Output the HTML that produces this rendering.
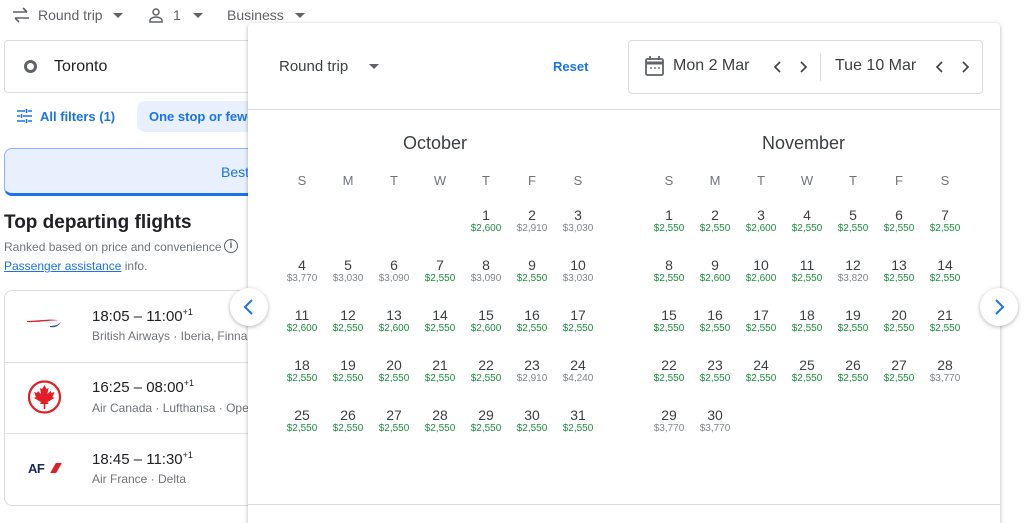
<!DOCTYPE html>
<html><head><meta charset="utf-8"><style>
*{margin:0;padding:0;box-sizing:border-box}
body{width:1024px;height:511px;overflow:hidden;background:#fff;font-family:"Liberation Sans",Arial,sans-serif;color:#3c4043;position:relative}
.a{position:absolute}
.tb{font-size:14px;color:#5f6368;top:7px}
.caret{display:inline-block;border-left:5px solid transparent;border-right:5px solid transparent;border-top:5px solid #5f6368;vertical-align:middle}
.grid{position:absolute;display:grid;grid-template-columns:repeat(7,46px);grid-auto-rows:50px;text-align:center}
.d{font-size:14px;color:#3c4043;line-height:16px}
.p{font-size:10px;line-height:12px;color:#80868b}
.g{color:#1e8e3e}
.hd{position:absolute;display:grid;grid-template-columns:repeat(7,46px);text-align:center;font-size:13px;color:#70757a}
.t{position:absolute;left:92px;font-size:15px;color:#202124}
.s{position:absolute;left:92px;font-size:12px;color:#70757a}
</style></head><body>
<svg class="a" style="left:12px;top:7px" width="18" height="16" viewBox="0 0 18 16"><path d="M1 5h14M11 1l4 4M17 11H3M7 15l-4-4" stroke="#5f6368" stroke-width="1.6" fill="none"/></svg>
<div class="a tb" style="left:38px">Round trip</div><span class="a caret" style="left:113px;top:13px"></span>
<svg class="a" style="left:148px;top:7px" width="16" height="16" viewBox="0 0 16 16"><circle cx="8" cy="5" r="3" stroke="#5f6368" stroke-width="1.5" fill="none"/><path d="M2 15v-1.5c0-2 3-3.5 6-3.5s6 1.5 6 3.5V15z" stroke="#5f6368" stroke-width="1.5" fill="none"/></svg>
<div class="a tb" style="left:173px">1</div><span class="a caret" style="left:193px;top:13px"></span>
<div class="a tb" style="left:227px">Business</div><span class="a caret" style="left:295px;top:13px"></span>
<div class="a" style="left:4px;top:40px;width:260px;height:53px;border:1px solid #dadce0;border-radius:4px"></div>
<div class="a" style="left:24px;top:60px;width:13px;height:13px;border:3px solid #5f6368;border-radius:50%"></div>
<div class="a" style="left:54px;top:58px;font-size:16px;color:#202124">Toronto</div>
<svg class="a" style="left:17px;top:109px" width="15" height="14" viewBox="0 0 15 14"><path d="M0 2h8M11 2h4M0 7h3M6 7h9M0 12h8M11 12h4M9.5 0v4M4.5 5v4M9.5 10v4" stroke="#1a73e8" stroke-width="1.6" fill="none"/></svg>
<div class="a" style="left:40px;top:109px;font-size:13px;color:#1a73e8;font-weight:bold">All filters (1)</div>
<div class="a" style="left:137px;top:101px;width:130px;height:31px;background:#e8f0fe;border-radius:8px"></div>
<div class="a" style="left:149px;top:109px;font-size:13px;color:#1a73e8;font-weight:bold;white-space:nowrap">One stop or fewer</div>
<div class="a" style="left:4px;top:148px;width:260px;height:48px;background:#e8f0fe;border:1px solid #8ab4f8;border-bottom:3px solid #1a73e8;border-radius:8px"></div>
<div class="a" style="left:221px;top:164px;font-size:14px;color:#1a73e8">Best</div>
<div class="a" style="left:4px;top:212px;font-size:19px;color:#202124;font-weight:bold">Top departing flights</div>
<div class="a" style="left:4px;top:240px;font-size:12px;color:#70757a">Ranked based on price and convenience</div>
<div class="a" style="left:224px;top:239px;width:14px;height:14px;border:1.3px solid #5f6368;border-radius:50%;font-size:10px;text-align:center;line-height:12px;color:#5f6368;font-weight:bold">i</div>
<div class="a" style="left:4px;top:259px;font-size:12px;color:#70757a"><span style="color:#1a73e8;text-decoration:underline">Passenger assistance</span> info.</div>
<div class="a" style="left:4px;top:290px;width:260px;height:216px;border:1px solid #dadce0;border-radius:8px"></div>
<div class="a" style="left:4px;top:362px;width:260px;border-top:1px solid #e0e0e0"></div>
<div class="a" style="left:4px;top:433px;width:260px;border-top:1px solid #e0e0e0"></div>
<svg class="a" style="left:26px;top:318px" width="38" height="12" viewBox="0 0 38 12"><path d="M1 3C12 3 28 0 34 3C30 1 14 5 1 4z" fill="#d9253a"/><path d="M24 8C30 8 34 6 35 3C34 7 30 10 24 9z" fill="#2d4a8a"/></svg>
<div class="t" style="top:307px">18:05 – 11:00<sup style="font-size:9px">+1</sup></div>
<div class="s" style="top:329px">British Airways · Iberia, Finnair</div>
<svg class="a" style="left:27px;top:380px" width="35" height="35" viewBox="0 0 35 35"><circle cx="17.5" cy="17" r="15.5" stroke="#e31e26" stroke-width="2.2" fill="none"/><path d="M17.5 5l2 4 2-1-1 6 3-3 1 2 3-1-2 5 2 1-7 4 1 2h-3.2v5h-1.6v-5H13l1-2-7-4 2-1-2-5 3 1 1-2 3 3-1-6 2 1z" fill="#e31e26"/></svg>
<div class="t" style="top:378px">16:25 – 08:00<sup style="font-size:9px">+1</sup></div>
<div class="s" style="top:401px">Air Canada · Lufthansa · Open</div>
<div class="a" style="left:28px;top:461px;font-size:13px;font-weight:bold;color:#1b2a5c;letter-spacing:-0.5px">AF</div>
<div class="a" style="left:53px;top:463px;width:6px;height:10px;background:#e31e26;transform:skewX(-30deg)"></div>
<div class="t" style="top:450px">18:45 – 11:30<sup style="font-size:9px">+1</sup></div>
<div class="s" style="top:472px">Air France · Delta</div>
<div class="a" style="left:248px;top:23px;width:752px;height:500px;background:#fff;box-shadow:0 1px 4px rgba(0,0,0,.3);border-radius:4px 4px 0 0"></div>
<div class="a" style="left:279px;top:58px;font-size:15px;color:#3c4043">Round trip</div><span class="a caret" style="left:369px;top:64px"></span>
<div class="a" style="left:553px;top:59px;font-size:13px;color:#1a73e8;font-weight:bold">Reset</div>
<div class="a" style="left:628px;top:40px;width:355px;height:54px;border:1px solid #dadce0;border-radius:4px"></div>
<svg class="a" style="left:645px;top:56px" width="19" height="20" viewBox="0 0 19 20"><rect x="1" y="3" width="17" height="16" rx="1.5" stroke="#5f6368" stroke-width="1.8" fill="none"/><path d="M1 7h17" stroke="#5f6368" stroke-width="3"/><path d="M5 0v4M14 0v4" stroke="#5f6368" stroke-width="1.8"/><path d="M5 12h2M9 12h2M13 12h2" stroke="#5f6368" stroke-width="1.3"/></svg>
<div class="a" style="left:673px;top:57px;font-size:16px;color:#3c4043">Mon 2 Mar</div>
<svg class="a" style="left:771px;top:60px" width="40" height="14" viewBox="0 0 40 14"><path d="M9 2L4 7l5 5M30 2l5 5-5 5" stroke="#3c4043" stroke-width="1.6" fill="none"/></svg>
<div class="a" style="left:820px;top:53px;height:28px;border-left:1px solid #dadce0"></div>
<div class="a" style="left:835px;top:57px;font-size:16px;color:#3c4043">Tue 10 Mar</div>
<svg class="a" style="left:933px;top:60px" width="40" height="14" viewBox="0 0 40 14"><path d="M9 2L4 7l5 5M30 2l5 5-5 5" stroke="#3c4043" stroke-width="1.6" fill="none"/></svg>
<div class="a" style="left:248px;top:109px;width:752px;border-top:1px solid #dadce0"></div>
<div class="a" style="left:248px;top:504px;width:752px;border-top:1px solid #dadce0"></div>
<div class="a" style="left:403px;top:133px;font-size:18px;color:#3c4043">October</div>
<div class="a" style="left:762px;top:133px;font-size:18px;color:#3c4043">November</div>
<div class="hd" style="left:279px;top:173px"><div>S</div><div>M</div><div>T</div><div>W</div><div>T</div><div>F</div><div>S</div></div>
<div class="hd" style="left:646px;top:173px"><div>S</div><div>M</div><div>T</div><div>W</div><div>T</div><div>F</div><div>S</div></div>
<div class="grid" style="left:279px;top:207px">
<div></div><div></div><div></div><div></div>
<div><div class="d">1</div><div class="p g">$2,600</div></div>
<div><div class="d">2</div><div class="p">$2,910</div></div>
<div><div class="d">3</div><div class="p">$3,030</div></div>
<div><div class="d">4</div><div class="p">$3,770</div></div>
<div><div class="d">5</div><div class="p">$3,030</div></div>
<div><div class="d">6</div><div class="p">$3,090</div></div>
<div><div class="d">7</div><div class="p g">$2,550</div></div>
<div><div class="d">8</div><div class="p">$3,090</div></div>
<div><div class="d">9</div><div class="p g">$2,550</div></div>
<div><div class="d">10</div><div class="p">$3,030</div></div>
<div><div class="d">11</div><div class="p g">$2,600</div></div>
<div><div class="d">12</div><div class="p g">$2,550</div></div>
<div><div class="d">13</div><div class="p g">$2,600</div></div>
<div><div class="d">14</div><div class="p g">$2,550</div></div>
<div><div class="d">15</div><div class="p g">$2,600</div></div>
<div><div class="d">16</div><div class="p g">$2,550</div></div>
<div><div class="d">17</div><div class="p g">$2,550</div></div>
<div><div class="d">18</div><div class="p g">$2,550</div></div>
<div><div class="d">19</div><div class="p g">$2,550</div></div>
<div><div class="d">20</div><div class="p g">$2,550</div></div>
<div><div class="d">21</div><div class="p g">$2,550</div></div>
<div><div class="d">22</div><div class="p g">$2,550</div></div>
<div><div class="d">23</div><div class="p">$2,910</div></div>
<div><div class="d">24</div><div class="p">$4,240</div></div>
<div><div class="d">25</div><div class="p g">$2,550</div></div>
<div><div class="d">26</div><div class="p g">$2,550</div></div>
<div><div class="d">27</div><div class="p g">$2,550</div></div>
<div><div class="d">28</div><div class="p g">$2,550</div></div>
<div><div class="d">29</div><div class="p g">$2,550</div></div>
<div><div class="d">30</div><div class="p g">$2,550</div></div>
<div><div class="d">31</div><div class="p g">$2,550</div></div>
</div>
<div class="grid" style="left:646px;top:207px">
<div><div class="d">1</div><div class="p g">$2,550</div></div>
<div><div class="d">2</div><div class="p g">$2,550</div></div>
<div><div class="d">3</div><div class="p g">$2,600</div></div>
<div><div class="d">4</div><div class="p g">$2,550</div></div>
<div><div class="d">5</div><div class="p g">$2,550</div></div>
<div><div class="d">6</div><div class="p g">$2,550</div></div>
<div><div class="d">7</div><div class="p g">$2,550</div></div>
<div><div class="d">8</div><div class="p g">$2,550</div></div>
<div><div class="d">9</div><div class="p g">$2,600</div></div>
<div><div class="d">10</div><div class="p g">$2,600</div></div>
<div><div class="d">11</div><div class="p g">$2,550</div></div>
<div><div class="d">12</div><div class="p">$3,820</div></div>
<div><div class="d">13</div><div class="p g">$2,550</div></div>
<div><div class="d">14</div><div class="p g">$2,550</div></div>
<div><div class="d">15</div><div class="p g">$2,550</div></div>
<div><div class="d">16</div><div class="p g">$2,550</div></div>
<div><div class="d">17</div><div class="p g">$2,550</div></div>
<div><div class="d">18</div><div class="p g">$2,550</div></div>
<div><div class="d">19</div><div class="p g">$2,550</div></div>
<div><div class="d">20</div><div class="p g">$2,550</div></div>
<div><div class="d">21</div><div class="p g">$2,550</div></div>
<div><div class="d">22</div><div class="p g">$2,550</div></div>
<div><div class="d">23</div><div class="p g">$2,550</div></div>
<div><div class="d">24</div><div class="p g">$2,550</div></div>
<div><div class="d">25</div><div class="p g">$2,550</div></div>
<div><div class="d">26</div><div class="p g">$2,550</div></div>
<div><div class="d">27</div><div class="p g">$2,550</div></div>
<div><div class="d">28</div><div class="p">$3,770</div></div>
<div><div class="d">29</div><div class="p">$3,770</div></div>
<div><div class="d">30</div><div class="p">$3,770</div></div>
</div>
<div class="a" style="left:230px;top:288px;width:38px;height:38px;border-radius:50%;background:#fff;box-shadow:0 1px 4px rgba(0,0,0,.3)"></div>
<svg class="a" style="left:241px;top:298px" width="16" height="18" viewBox="0 0 16 18"><path d="M11 2L4 9l7 7" stroke="#1a73e8" stroke-width="2" fill="none"/></svg>
<div class="a" style="left:980px;top:288px;width:38px;height:38px;border-radius:50%;background:#fff;box-shadow:0 1px 4px rgba(0,0,0,.3)"></div>
<svg class="a" style="left:991px;top:298px" width="16" height="18" viewBox="0 0 16 18"><path d="M5 2l7 7-7 7" stroke="#1a73e8" stroke-width="2" fill="none"/></svg>
</body></html>
